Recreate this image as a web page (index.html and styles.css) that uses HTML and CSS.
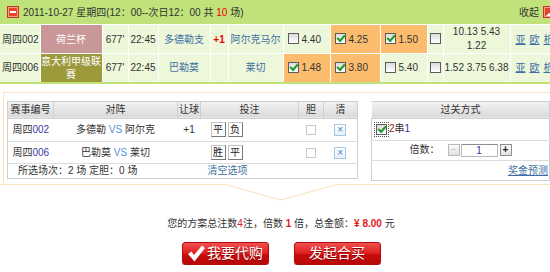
FILE: index.html
```html
<!DOCTYPE html>
<html lang="zh-CN">

<head>
    <meta charset="UTF-8" />
    <meta name="viewport" content="width=device-width, initial-scale=1.0" />
    <title>竞彩足球 混合过关</title>
    <link rel="stylesheet" href="styles.css">
</head>

<body>
    <div class="day-bar">
        <span class="ico ico-minus"></span>
        <span class="day-title">2011-10-27 星期四(12：00--次日12：00 共 <em>10</em> 场)</span>
        <a class="fold" href="#">收起<span class="ico ico-up"></span></a>
    </div>

    <table class="matches">
        <colgroup>
            <col class="m-num"><col class="m-league"><col class="m-id"><col class="m-time">
            <col class="m-home"><col class="m-rq"><col class="m-away">
            <col class="m-odd"><col class="m-odd2"><col class="m-odd"><col class="m-all">
            <col class="m-avg"><col class="m-links">
        </colgroup>
        <tr>
            <td class="num">周四002</td>
            <td class="league league-nl">荷兰杯</td>
            <td>677'</td>
            <td>22:45</td>
            <td class="team">多德勒支</td>
            <td class="rq">+1</td>
            <td class="team">阿尔克马尔</td>
            <td class="odd"><span class="cb"></span>4.40</td>
            <td class="odd picked"><span class="cb on"></span>4.25</td>
            <td class="odd picked"><span class="cb on"></span>1.50</td>
            <td><span class="cb"></span></td>
            <td class="avg">10.13 5.43<br>1.22</td>
            <td class="links"><a href="#">亚</a><a href="#">欧</a><a href="#">析</a></td>
        </tr>
        <tr>
            <td class="num">周四006</td>
            <td class="league league-it">意大利甲级联赛</td>
            <td>677'</td>
            <td>22:45</td>
            <td class="team">巴勒莫</td>
            <td class="rq"></td>
            <td class="team">莱切</td>
            <td class="odd picked"><span class="cb on"></span>1.48</td>
            <td class="odd picked"><span class="cb on"></span>3.80</td>
            <td class="odd"><span class="cb"></span>5.40</td>
            <td><span class="cb"></span></td>
            <td class="avg">1.52 3.75 6.38</td>
            <td class="links"><a href="#">亚</a><a href="#">欧</a><a href="#">析</a></td>
        </tr>
    </table>

    <div class="bet-box">
        <table class="picked-list">
            <colgroup>
                <col class="p-num"><col class="p-vs"><col class="p-rq"><col class="p-bet"><col class="p-dan"><col class="p-del">
            </colgroup>
            <thead>
                <tr><th>赛事编号</th><th>对阵</th><th>让球</th><th>投注</th><th>胆</th><th>清</th></tr>
            </thead>
            <tbody>
                <tr class="row-1">
                    <td>周四<span class="no">002</span></td>
                    <td>多德勒 <span class="vs">VS</span> 阿尔克</td>
                    <td>+1</td>
                    <td class="bets"><span class="bet-btn">平</span><span class="bet-btn">负</span></td>
                    <td><span class="dan"></span></td>
                    <td><span class="del">×</span></td>
                </tr>
                <tr class="row-2">
                    <td>周四<span class="no">006</span></td>
                    <td>巴勒莫 <span class="vs">VS</span> 莱切</td>
                    <td></td>
                    <td class="bets"><span class="bet-btn">胜</span><span class="bet-btn">平</span></td>
                    <td><span class="dan"></span></td>
                    <td><span class="del">×</span></td>
                </tr>
                <tr class="sum">
                    <td colspan="3" class="sum-text">所选场次：2 场 定胆：0 场</td>
                    <td colspan="3" class="sum-clear"><a href="#">清空选项</a></td>
                </tr>
            </tbody>
        </table>

        <table class="pass-list">
            <thead>
                <tr><th>过关方式</th></tr>
            </thead>
            <tbody>
                <tr class="pass-type">
                    <td><span class="focus"><span class="cb on"></span></span><span class="c2">2</span>串<span class="c1">1</span></td>
                </tr>
                <tr class="multi">
                    <td>倍数：<span class="step step-minus">−</span><span class="multi-input">1</span><span class="step step-plus">+</span></td>
                </tr>
                <tr class="prize">
                    <td><a href="#">奖金预测</a></td>
                </tr>
            </tbody>
        </table>
    </div>
    <svg class="box-arrow" width="550" height="18" viewBox="0 0 550 18">
        <polyline points="0,0.5 225,0.5 281,16 337,0.5 550,0.5" fill="none" stroke="#fbe2c0" stroke-width="1.2" />
    </svg>

    <p class="summary">您的方案总注数<em>4</em>注，倍数 <b>1</b> 倍，总金额：<b>¥ 8.00</b> 元</p>

    <div class="actions">
        <a class="red-btn" href="#">
            <svg class="ok" width="18" height="17" viewBox="0 0 18 17">
                <polygon points="1,9 4.5,6.5 7,10 15,0.5 18,3 7.5,16.5" fill="#fff" />
            </svg>我要代购</a>
        <a class="red-btn" href="#">发起合买</a>
    </div>
</body>

</html>
```

FILE: styles.css
```css
* {
    box-sizing: border-box;
}

body {
    margin: 0;
    width: 550px;
    overflow: hidden;
    font: 10px/1.3 "Liberation Sans", "Noto Sans CJK SC", sans-serif;
    color: #333;
    background: #fff;
}

a {
    color: #3d6fa3;
}

/* 日期栏 */
.day-bar {
    height: 24px;
    display: flex;
    align-items: center;
    padding-left: 7px;
    background: #bfe27b;
    overflow: hidden;
}

.day-title {
    margin-left: 4px;
}

.day-title em {
    font-style: normal;
    color: #e00;
}

.fold {
    margin-left: auto;
    margin-right: -5px;
    display: flex;
    align-items: center;
    color: #333;
    text-decoration: none;
}

.ico {
    display: inline-block;
    width: 12px;
    height: 12px;
    background: #e8442c;
    border: 1px solid #c8341e;
    box-shadow: inset 0 0 0 1px #f6a08e;
    position: relative;
}

.ico-minus::after {
    content: "";
    position: absolute;
    left: 2px;
    top: 4px;
    width: 6px;
    height: 2px;
    background: #fff;
}

.ico-up {
    margin-left: 4px;
}

.ico-up::after {
    content: "";
    position: absolute;
    left: 2px;
    top: 3px;
    border: 3px solid transparent;
    border-bottom-color: #fff;
}

/* 对阵列表 */
.matches {
    width: 550px;
    table-layout: fixed;
    border-collapse: collapse;
    background: #edf7d9;
    border-bottom: 2px solid #bfe27b;
}

.m-num { width: 40px; }
.m-league { width: 62px; }
.m-id { width: 26px; }
.m-time { width: 30px; }
.m-home { width: 52px; }
.m-rq { width: 18px; }
.m-away { width: 55px; }
.m-odd { width: 47px; }
.m-odd2 { width: 50px; }
.m-all { width: 16px; }
.m-avg { width: 67px; }
.m-links { width: 40px; }

.matches td {
    height: 29px;
    padding: 0;
    border: 1px solid #fff;
    text-align: center;
    white-space: nowrap;
    overflow: hidden;
}

.matches td:first-child {
    border-left: 0;
}

.matches .num {
    text-align: left;
    padding-left: 2px;
}

.league {
    color: #fff;
    line-height: 13px;
}

.matches .league {
    white-space: normal;
}

.league-nl {
    background: #c99797;
}

.league-it {
    background: #9b993a;
}

.team {
    color: #3d6fa3;
}

.rq {
    color: #e00;
    font-weight: bold;
}

.matches .odd {
    text-align: left;
    padding-left: 4px;
}

.odd .cb {
    margin-right: 3px;
}

.odd.picked {
    background: #fbbd6d;
}

.avg {
    line-height: 14px;
}

.matches .links {
    text-align: left;
    padding-left: 5px;
}

.links a {
    margin-right: 4px;
}

.cb {
    display: inline-block;
    width: 11px;
    height: 11px;
    border: 1px solid #5c5c5c;
    background: linear-gradient(#dcdcdc, #fff);
    vertical-align: middle;
    position: relative;
    top: -1px;
}

.cb.on::after {
    content: "";
    position: absolute;
    left: 1px;
    top: 1px;
    width: 6px;
    height: 3px;
    border-left: 2px solid #1e9a28;
    border-bottom: 2px solid #1e9a28;
    transform: rotate(-48deg);
}

/* 投注框 */
.bet-box {
    margin: 8px 0 0 3px;
    width: 560px;
    padding: 8px 0 3px 3px;
    border: 1px solid #fbe2c0;
    border-bottom: 0;
    display: flex;
    align-items: flex-start;
    gap: 13px;
}

.box-arrow {
    display: block;
}

.picked-list,
.pass-list {
    table-layout: fixed;
    border-collapse: collapse;
    border: 1px solid #cfcfcf;
    border-top: 0;
}

.picked-list {
    width: 350px;
}

.pass-list {
    width: 179px;
}

.p-num { width: 46px; }
.p-vs { width: 124px; }
.p-rq { width: 23px; }
.p-bet { width: 98px; }
.p-dan { width: 25px; }
.p-del { width: 34px; }

.picked-list th,
.pass-list th {
    height: 17px;
    padding: 0;
    font-weight: normal;
    background: linear-gradient(#f3f3f3, #d9d9d9);
    border: 1px solid #cfcfcf;
    border-left-color: #fff;
}

.picked-list th:first-child {
    border-left-color: #cfcfcf;
}

.picked-list td,
.pass-list td {
    padding: 0;
    text-align: center;
    border-top: 1px solid #dcdcdc;
    white-space: nowrap;
}

.row-1 td {
    height: 23px;
}

.row-2 td {
    height: 22px;
}

.sum td {
    height: 15px;
}

.no {
    color: #3b3ba8;
}

.vs {
    color: #5a8ee0;
}

.picked-list .bets {
    text-align: left;
    padding-left: 10px;
}

.bet-btn {
    display: inline-block;
    width: 15px;
    height: 15px;
    margin-right: 2px;
    line-height: 13px;
    text-align: center;
    color: #222;
    background: #fff;
    border: 1px solid #c4c4c4;
    border-right-color: #7a7a7a;
    border-bottom-color: #7a7a7a;
    vertical-align: middle;
}

.dan {
    display: inline-block;
    width: 10px;
    height: 10px;
    border: 1px solid #c8c8c8;
    background: #fff;
    vertical-align: middle;
}

.del {
    display: inline-block;
    width: 12px;
    height: 12px;
    line-height: 10px;
    font-size: 10px;
    color: #2f86d8;
    border: 1px solid #a9c6e4;
    background: linear-gradient(#fff, #e6eef8);
    vertical-align: middle;
}

.picked-list .sum-text {
    text-align: left;
    padding-left: 10px;
}

.picked-list .sum-clear {
    text-align: left;
    padding-left: 7px;
}

.sum-clear a {
    text-decoration: none;
}

.pass-type td {
    height: 22px;
    text-align: left;
    padding-left: 2px;
}

.focus {
    display: inline-block;
    padding: 1px;
    border: 1px dotted #555;
    vertical-align: middle;
    line-height: 0;
}

.focus .cb {
    top: 0;
}

.c2 {
    color: #8a2a10;
}

.c1 {
    color: #4a2aa0;
}

.multi td {
    height: 20px;
}

.step {
    display: inline-block;
    width: 12px;
    height: 12px;
    margin-left: 8px;
    line-height: 10px;
    text-align: center;
    vertical-align: middle;
    border: 1px solid #b9b9b9;
    background: linear-gradient(#fafafa, #e2e2e2);
}

.step-minus {
    color: #bbb;
}

.step-plus {
    margin-left: 2px;
    color: #222;
    font-weight: bold;
    border-color: #8e8e8e;
}

.multi-input {
    display: inline-block;
    width: 37px;
    height: 13px;
    margin-left: 1px;
    line-height: 11px;
    text-align: center;
    vertical-align: middle;
    color: #4a2aa0;
    border: 1px solid #b9b9b9;
    border-top-color: #8e8e8e;
    background: #fff;
}

.prize td {
    height: 20px;
    text-align: right;
    padding-right: 1px;
}

/* 金额与按钮 */
.summary {
    margin: 15px 0 0;
    padding-left: 12px;
    line-height: 14px;
    text-align: center;
}

.summary em,
.summary b {
    font-style: normal;
    color: #e02020;
}

.actions {
    margin-top: 11px;
    padding-left: 12px;
    display: flex;
    justify-content: center;
    gap: 25px;
}

.red-btn {
    width: 87px;
    height: 23px;
    display: flex;
    align-items: center;
    justify-content: center;
    font-size: 14px;
    color: #fff;
    text-decoration: none;
    text-shadow: 0 1px 0 #8c0000;
    border: 1px solid #b30c0c;
    border-radius: 3px;
    background: linear-gradient(#f25050, #dc1e1e 50%, #c80d0d 52%, #b80808);
    box-shadow: 0 1px 1px rgba(0, 0, 0, 0.25);
}

.ok {
    margin-right: 2px;
}
```
